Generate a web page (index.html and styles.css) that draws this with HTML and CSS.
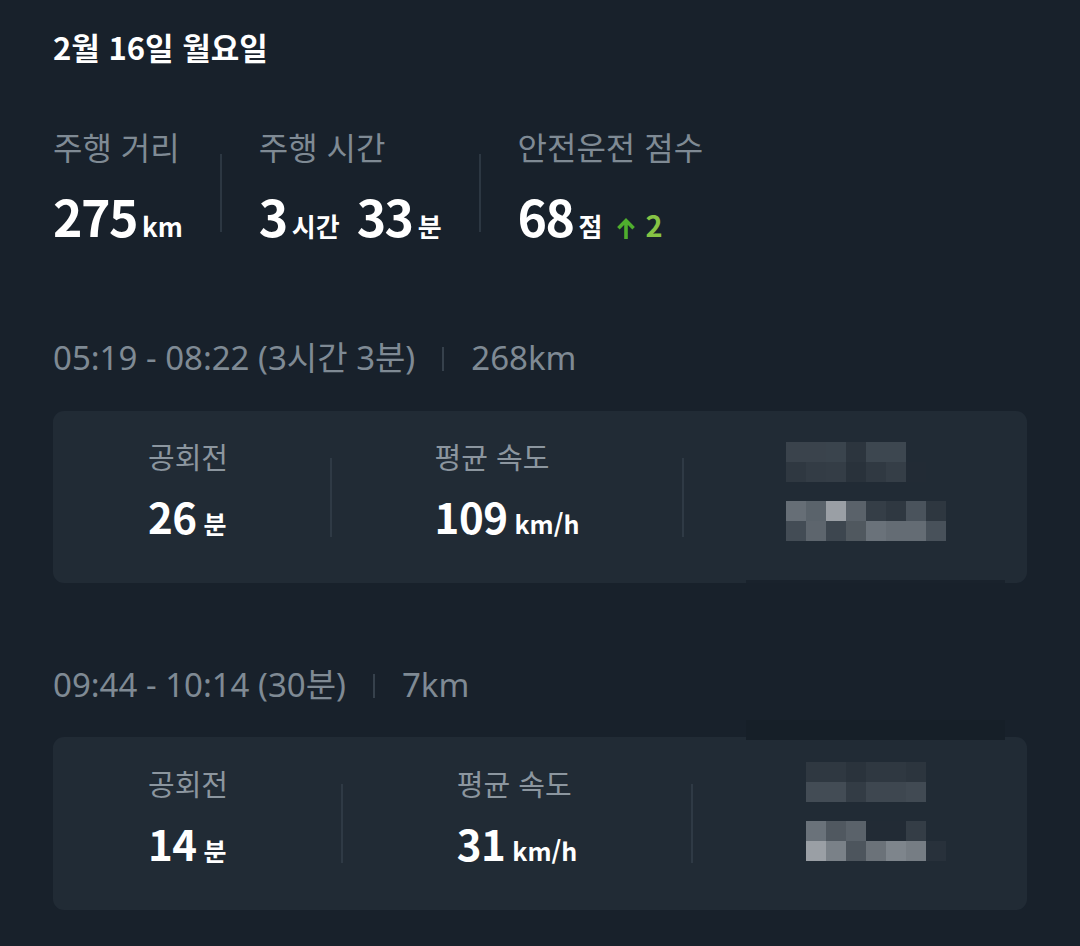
FILE: index.html
```html
<!DOCTYPE html>
<html lang="ko">
<head>
<meta charset="utf-8">
<title>주행 기록</title>
<link rel="stylesheet" href="styles.css">
</head>
<body>
<main class="page">
  <h1 class="title">2월 16일 월요일</h1>

  <section class="stats">
    <div class="stat">
      <div class="stat-label">주행 거리</div>
      <div class="stat-value"><span class="num">275</span><span class="unit">km</span></div>
    </div>
    <div class="stat-divider"></div>
    <div class="stat">
      <div class="stat-label">주행 시간</div>
      <div class="stat-value"><span class="num">3</span><span class="unit">시간</span><span class="num num-gap">33</span><span class="unit">분</span></div>
    </div>
    <div class="stat-divider"></div>
    <div class="stat">
      <div class="stat-label">안전운전 점수</div>
      <div class="stat-value"><span class="num">68</span><span class="unit">점</span>
        <span class="delta"><svg class="delta-icon" viewBox="0 0 18 21" width="18" height="21" aria-hidden="true"><path d="M9 21V2.6M1.4 10.2L9 2.6l7.6 7.6" fill="none" stroke="#4fae2e" stroke-width="3.6" stroke-linecap="butt" stroke-linejoin="miter"/></svg><span class="delta-num">2</span></span>
      </div>
    </div>
  </section>

  <section class="trip">
    <div class="trip-head"><span>05:19 - 08:22 (3시간 3분)</span><span class="trip-sep"></span><span>268km</span></div>
    <div class="card card-a">
      <div class="cell">
        <div class="cell-label">공회전</div>
        <div class="cell-value"><span class="cnum">26</span><span class="cunit">분</span></div>
      </div>
      <div class="cell-divider"></div>
      <div class="cell">
        <div class="cell-label">평균 속도</div>
        <div class="cell-value"><span class="cnum">109</span><span class="cunit">km/h</span></div>
      </div>
      <div class="cell-divider"></div>
      <div class="mosaic mosaic-a">
        <div class="mrow">
          <i style="background:#3a434c"></i><i style="background:#3a434c"></i><i style="background:#3a444d"></i><i style="background:#2c353e"></i><i style="background:#3d4750"></i><i style="background:#3d4750"></i><i></i><i></i>
        </div>
        <div class="mrow">
          <i style="background:#2f3841"></i><i style="background:#333c45"></i><i style="background:#343d46"></i><i style="background:#29323b"></i><i style="background:#303942"></i><i style="background:#353e47"></i><i style="background:#222b35"></i><i></i>
        </div>
        <div class="mrow mrow-gap">
          <i style="background:#666e76"></i><i style="background:#5a636b"></i><i style="background:#9a9fa5"></i><i style="background:#5a626a"></i><i style="background:#353e47"></i><i style="background:#2f3841"></i><i style="background:#4a535c"></i><i style="background:#2e3740"></i>
        </div>
        <div class="mrow">
          <i style="background:#434c55"></i><i style="background:#5d656d"></i><i style="background:#3d464f"></i><i style="background:#50585f"></i><i style="background:#6a727a"></i><i style="background:#646c74"></i><i style="background:#646c74"></i><i style="background:#48515a"></i>
        </div>
      </div>
      <div class="edge edge-bottom"></div>
    </div>
  </section>

  <section class="trip trip-second">
    <div class="trip-head"><span>09:44 - 10:14 (30분)</span><span class="trip-sep"></span><span>7km</span></div>
    <div class="card card-b">
      <div class="edge edge-top"></div>
      <div class="cell">
        <div class="cell-label">공회전</div>
        <div class="cell-value"><span class="cnum">14</span><span class="cunit">분</span></div>
      </div>
      <div class="cell-divider"></div>
      <div class="cell">
        <div class="cell-label">평균 속도</div>
        <div class="cell-value"><span class="cnum">31</span><span class="cunit">km/h</span></div>
      </div>
      <div class="cell-divider"></div>
      <div class="mosaic mosaic-b">
        <div class="mrow">
          <i style="background:#2f3841"></i><i style="background:#2f3841"></i><i style="background:#2a333c"></i><i style="background:#2f3841"></i><i style="background:#2f3841"></i><i style="background:#2c353e"></i><i></i>
        </div>
        <div class="mrow">
          <i style="background:#434c55"></i><i style="background:#434c55"></i><i style="background:#333c45"></i><i style="background:#3e4750"></i><i style="background:#3e4750"></i><i style="background:#414a53"></i><i></i>
        </div>
        <div class="mrow mrow-gap">
          <i style="background:#6a727a"></i><i style="background:#505860"></i><i style="background:#5a626a"></i><i style="background:#222b35"></i><i style="background:#222b35"></i><i style="background:#343d46"></i><i></i>
        </div>
        <div class="mrow">
          <i style="background:#9a9fa5"></i><i style="background:#7a8188"></i><i style="background:#4d555d"></i><i style="background:#6b7279"></i><i style="background:#7e858c"></i><i style="background:#767d84"></i><i style="background:#28313b"></i>
        </div>
      </div>
    </div>
  </section>
</main>
</body>
</html>
```

FILE: styles.css
```css
* { box-sizing: border-box; }

html, body {
  margin: 0;
  padding: 0;
  background: #18212b;
}

body {
  font-family: "Noto Sans CJK KR", "Noto Sans", sans-serif;
  color: #ffffff;
  width: 1080px;
  height: 946px;
  overflow: hidden;
}

.page {
  padding: 27px 53px 0 53px;
}

.title {
  margin: 0;
  font-size: 31px;
  line-height: 40px;
  font-weight: 700;
}

/* summary stats */
.stats {
  display: flex;
  align-items: flex-start;
  gap: 37px;
  margin-top: 59px;
}

.stat {
  display: flex;
  flex-direction: column;
  gap: 19px;
}

.stat-label {
  font-size: 32px;
  line-height: 40px;
  color: #7f8a94;
  font-weight: 400;
}

.stat-value {
  display: flex;
  align-items: baseline;
  height: 60px;
  line-height: 60px;
}

.num {
  font-size: 50px;
  font-weight: 700;
  letter-spacing: -1.5px;
}

.num-gap { margin-left: 17px; }

.unit {
  font-size: 26px;
  font-weight: 700;
  margin-left: 5px;
}

.stat-divider {
  width: 2px;
  height: 78px;
  margin-top: 28px;
  background: #2c3742;
}

.delta {
  display: inline-flex;
  align-items: baseline;
  margin-left: 15px;
}

.delta-icon {
  flex: none;
  align-self: center;
  position: relative;
  top: 4px;
  margin-right: 10px;
}

.delta-num {
  font-size: 29px;
  font-weight: 700;
  color: #86c345;
}

/* trips */
.trip { margin-top: 93px; }
.trip-second { margin-top: 82px; }

.trip-head {
  display: flex;
  align-items: center;
  font-family: "Noto Sans", "Noto Sans CJK KR", sans-serif;
  font-size: 33px;
  line-height: 40px;
  color: #7f8a94;
}

.trip-sep {
  width: 2px;
  height: 24px;
  margin: 2px 27px 0 27px;
  background: #36414c;
}

.card {
  position: relative;
  display: flex;
  align-items: center;
  justify-content: space-between;
  height: 172px;
  margin-top: 33px;
  padding: 0 81px 0 95px;
  background: #212b35;
  border-radius: 11px;
}

.card-b { margin-top: 32px; height: 173px; }

.cell {
  display: flex;
  flex-direction: column;
  gap: 16px;
  margin-bottom: 14px;
}

.cell-label {
  font-size: 29px;
  line-height: 36px;
  color: #8c969f;
}

.cell-value {
  display: flex;
  align-items: baseline;
  line-height: 52px;
  height: 52px;
}

.cnum {
  font-size: 42px;
  font-weight: 700;
  letter-spacing: -0.5px;
}

.cunit {
  font-size: 25px;
  font-weight: 700;
  margin-left: 7px;
}

.cell-divider {
  width: 2px;
  height: 79px;
  background: #2f3a45;
}

/* blurred (mosaic) region */
.mosaic {
  display: flex;
  flex-direction: column;
}

.mosaic-a { width: 160px; margin-bottom: 12px; }
.mosaic-b { width: 140px; margin-bottom: 24px; }

.mrow { display: flex; }
.mrow-gap { margin-top: 19px; }

.mrow i {
  display: block;
  width: 20px;
  height: 20px;
}

/* compression artefact strips around the mosaic */
.edge {
  position: absolute;
  left: 693px;
  width: 259px;
  background: #19222c;
}

.edge-bottom { bottom: 0; height: 3px; }
.edge-top { top: -17px; height: 20px; background: #161f28; }
```
